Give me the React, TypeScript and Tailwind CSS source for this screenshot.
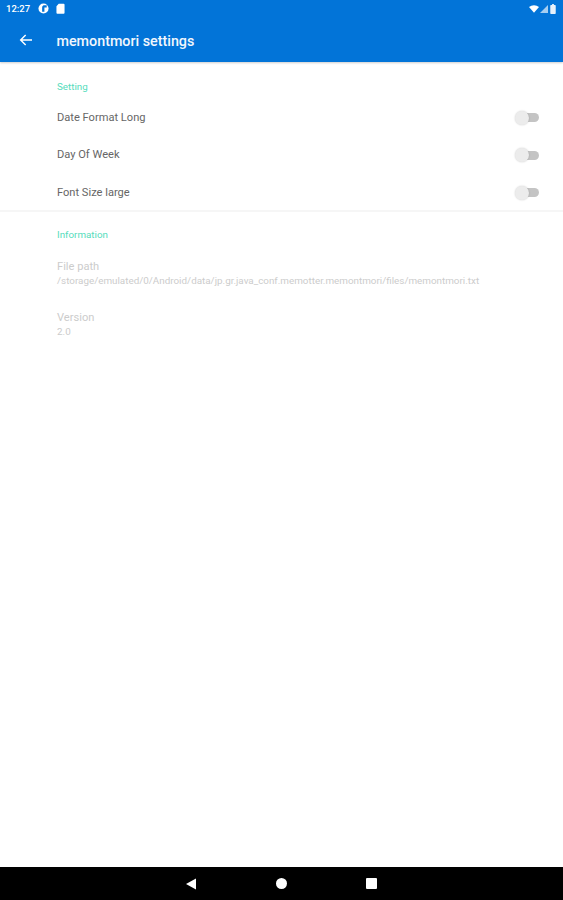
const settings = ['Date Format Long', 'Day Of Week', 'Font Size large']

const info = [
  { title: 'File path', value: '/storage/emulated/0/Android/data/jp.gr.java_conf.memotter.memontmori/files/memontmori.txt' },
  { title: 'Version', value: '2.0' },
]

const Toggle = () => (
  <div className="relative w-[24px] h-[14px] flex items-center">
    <div className="absolute right-0 w-[20px] h-[9px] rounded-full bg-[#c4c4c4]" />
    <div className="absolute left-0 w-[14px] h-[14px] rounded-full bg-[#ececec] shadow-[0_0_2px_rgba(0,0,0,0.2)]" />
  </div>
)

const StatusBar = () => (
  <div className="h-[17px] pl-[6px] pr-[5px] flex items-center justify-between text-white">
    <div className="flex items-center">
      <span className="text-[9.5px] font-medium leading-none">12:27</span>
      <svg viewBox="0 0 12 12" className="w-[11px] h-[11px] ml-[8px]">
        <circle cx="6" cy="6" r="5.5" fill="#fff" />
        <path d="M6 2.5h3.5v2.500H7V9.500H4.500V5A2.500 2.500 0 0 1 6 2.500z" fill="#0274d8" />
      </svg>
      <svg viewBox="0 0 10 12" className="w-[9px] h-[11px] ml-[7px]">
        <path d="M3 .8h5.500a1 1 0 0 1 1 1v9a1 1 0 0 1-1 1h-7a1 1 0 0 1-1-1V3.500z" fill="#fff" />
      </svg>
    </div>
    <div className="flex items-center gap-[1px] mr-[2px]">
      <svg viewBox="0 0 12 9" className="w-[10px] h-[8px]">
        <path d="M0 2.200A9 9 0 0 1 12 2.200L6 9z" fill="#fff" />
      </svg>
      <svg viewBox="0 0 8 8" className="w-[8px] h-[8px]">
        <path d="M8 0v8H0z" fill="#fff" fillOpacity="0.65" />
      </svg>
      <svg viewBox="0 0 6 11" className="w-[6px] h-[10px] ml-[1px]">
        <path d="M2 0h2v1h1.200a.8.8 0 0 1 .8.8v8.400a.8.8 0 0 1-.8.8H.8a.8.8 0 0 1-.8-.8V1.800a.8.8 0 0 1 .8-.8H2z" fill="#fff" fillOpacity="0.9" />
      </svg>
    </div>
  </div>
)

export default function App() {
  return (
    <div className="w-[563px] h-[900px] flex flex-col bg-white font-['Roboto',sans-serif] overflow-hidden">
      {/* Header */}
      <div className="h-[62px] bg-[#0274d8] shadow-[0_1px_2px_rgba(0,0,0,0.2)]">
        <StatusBar />
        <div className="h-[45px] flex items-center">
          <svg viewBox="0 0 24 24" className="w-[16px] h-[16px] ml-[18px]" fill="none" stroke="#fff" strokeWidth="2.2">
            <path d="M21 12H4M11.500 4.500 4 12l7.500 7.500" />
          </svg>
          <span className="ml-[22.5px] mt-[5px] text-[14.3px] font-medium text-[#f2f7fd]">memontmori settings</span>
        </div>
      </div>

      {/* Settings */}
      <div className="flex-1 flex flex-col">
        <div className="pl-[57px] pr-[24px] h-[150px] border-b-2 border-[#f6f6f6]">
          <div className="pt-[19px] h-[37px] text-[9.8px] leading-[12px] text-[#55dcbc]">Setting</div>
          {settings.map((label) => (
            <div key={label} className="h-[37.500px] flex items-center justify-between">
              <span className="mt-[1px] text-[11.1px] text-[#666666]">{label}</span>
              <Toggle />
            </div>
          ))}
        </div>

        {/* Information */}
        <div className="pl-[57px] pr-[24px]">
          <div className="pt-[17px] h-[48px] text-[9.8px] leading-[12px] text-[#55dcbc]">Information</div>
          {info.map((item) => (
            <div key={item.title} className="h-[51px]">
              <div className="text-[11.1px] leading-[14px] text-[#cccccc]">{item.title}</div>
              <div className="mt-[1px] text-[9.85px] leading-[12px] text-[#cccccc]">{item.value}</div>
            </div>
          ))}
        </div>
      </div>

      {/* Nav bar */}
      <div className="h-[33px] bg-black flex items-center justify-between pl-[185px] pr-[186px]">
        <svg viewBox="0 0 12 12" className="w-[12px] h-[12px]">
          <path d="M11 .5v11L1 6z" fill="#fff" />
        </svg>
        <div className="w-[11px] h-[11px] rounded-full bg-white" />
        <div className="w-[11px] h-[11px] rounded-[1px] bg-white" />
      </div>
    </div>
  )
}
